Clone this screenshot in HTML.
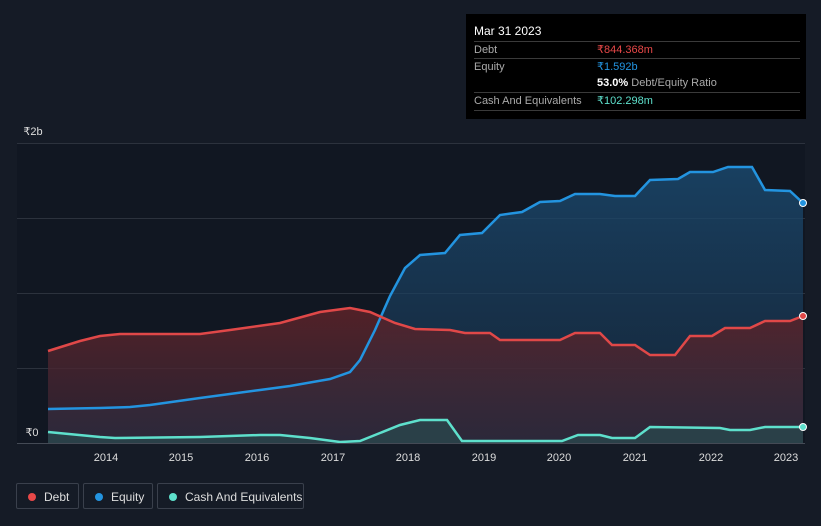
<!DOCTYPE html>
<html><head><style>
body{margin:0;width:821px;height:526px;background:#151b26;font-family:"Liberation Sans",sans-serif;overflow:hidden;position:relative}
.tt{position:absolute;left:466px;top:14px;width:340px;height:105px;background:#000;color:#fff;font-size:11px}
.row{position:absolute;left:8px;width:326px;border-top:1px solid #3a3a3a;height:17px;line-height:17px;color:#aaa}
.row b{position:absolute;left:123px;font-weight:normal}
.leg{position:absolute;top:483px;height:26px;border:1px solid #3a404c;border-radius:2px;color:#ddd;font-size:12px;line-height:26px;box-sizing:border-box}
.leg i{position:absolute;left:11px;top:9px;width:8px;height:8px;border-radius:50%}
.leg span{position:absolute;left:27px}
</style></head><body>
<svg width="821" height="526" style="position:absolute;left:0;top:0">
<defs>
<linearGradient id="ge" x1="0" y1="0" x2="0" y2="1"><stop offset="0" stop-color="#1a4a70" stop-opacity=".8"/><stop offset="1" stop-color="#1a3550" stop-opacity=".5"/></linearGradient>
<linearGradient id="gd" x1="0" y1="0" x2="0" y2="1"><stop offset="0" stop-color="#5a2228" stop-opacity=".9"/><stop offset="1" stop-color="#3a2a3a" stop-opacity=".6"/></linearGradient>
</defs>
<rect x="17" y="143" width="788" height="300" fill="#111722"/>
<g stroke="#2c323d" stroke-width="1">
<line x1="17" y1="143.5" x2="805" y2="143.5"/><line x1="17" y1="218.5" x2="805" y2="218.5"/><line x1="17" y1="293.5" x2="805" y2="293.5"/><line x1="17" y1="368.5" x2="805" y2="368.5"/>
</g>
<path d="M48,409 L100,408 130,407 150,405 200,398 260,390 290,386 330,379 350,372 360,360 375,330 390,296 405,268 420,255 445,253 460,235 482,233 500,215 522,212 540,202 560,201 575,194 600,194 615,196 635,196 650,180 678,179 690,172 713,172 728,167 752,167 765,190 790,191 803,203 L803,443 48,443Z" fill="url(#ge)"/>
<path d="M48,351 L80,341 100,336 120,334 200,334 230,330 280,323 320,312 350,308 370,312 395,323 415,329 450,330 465,333 490,333 500,340 560,340 575,333 600,333 612,345 635,345 650,355 675,355 690,336 712,336 725,328 750,328 765,321 790,321 803,316 L803,443 48,443Z" fill="url(#gd)"/>
<path d="M48,432 L100,437 115,438 200,437 260,435 280,435 310,438 340,442 360,441 380,433 400,425 420,420 447,420 462,441 480,441 562,441 578,435 600,435 612,438 635,438 650,427 720,428 730,430 750,430 765,427 803,427 L803,443 48,443Z" fill="#2a4a4e" fill-opacity=".7"/>
<path d="M48,409 L100,408 130,407 150,405 200,398 260,390 290,386 330,379 350,372 360,360 375,330 390,296 405,268 420,255 445,253 460,235 482,233 500,215 522,212 540,202 560,201 575,194 600,194 615,196 635,196 650,180 678,179 690,172 713,172 728,167 752,167 765,190 790,191 803,203" fill="none" stroke="#2394e0" stroke-width="2.5"/>
<path d="M48,351 L80,341 100,336 120,334 200,334 230,330 280,323 320,312 350,308 370,312 395,323 415,329 450,330 465,333 490,333 500,340 560,340 575,333 600,333 612,345 635,345 650,355 675,355 690,336 712,336 725,328 750,328 765,321 790,321 803,316" fill="none" stroke="#e04848" stroke-width="2.5"/>
<path d="M48,432 L100,437 115,438 200,437 260,435 280,435 310,438 340,442 360,441 380,433 400,425 420,420 447,420 462,441 480,441 562,441 578,435 600,435 612,438 635,438 650,427 720,428 730,430 750,430 765,427 803,427" fill="none" stroke="#5ee0cc" stroke-width="2.5"/>
<line x1="17" y1="443.5" x2="805" y2="443.5" stroke="#444a55"/>
<circle cx="803" cy="203" r="3.5" fill="#2394e0" stroke="#fff"/>
<circle cx="803" cy="316" r="3.5" fill="#e04848" stroke="#fff"/>
<circle cx="803" cy="427" r="3.5" fill="#5ee0cc" stroke="#fff"/>
<g fill="#ddd" font-size="11" font-family="Liberation Sans" text-anchor="middle">
<text x="106" y="461">2014</text><text x="181" y="461">2015</text><text x="257" y="461">2016</text><text x="333" y="461">2017</text><text x="408" y="461">2018</text><text x="484" y="461">2019</text><text x="559" y="461">2020</text><text x="635" y="461">2021</text><text x="711" y="461">2022</text><text x="786" y="461">2023</text>
<text x="33" y="135">₹2b</text><text x="32" y="436">₹0</text>
</g>
</svg>
<div class="tt">
<div style="position:absolute;left:8px;top:10px;font-size:12px">Mar 31 2023</div>
<div class="row" style="top:27px">Debt<b style="color:#e84848">₹844.368m</b></div>
<div class="row" style="top:44px">Equity<b style="color:#2394e0">₹1.592b</b></div>
<div class="row" style="top:61px;border-top:none"><b style="color:#aaa"><span style="color:#fff;font-weight:bold">53.0%</span> Debt/Equity Ratio</b></div>
<div class="row" style="top:78px">Cash And Equivalents<b style="color:#5ee0cc">₹102.298m</b></div>
<div class="row" style="top:96px;height:0"></div>
</div>
<div class="leg" style="left:16px;width:63px"><i style="background:#e84848"></i><span>Debt</span></div>
<div class="leg" style="left:83px;width:70px"><i style="background:#2394e0"></i><span>Equity</span></div>
<div class="leg" style="left:157px;width:147px"><i style="background:#5ee0cc"></i><span>Cash And Equivalents</span></div>
</body></html>
